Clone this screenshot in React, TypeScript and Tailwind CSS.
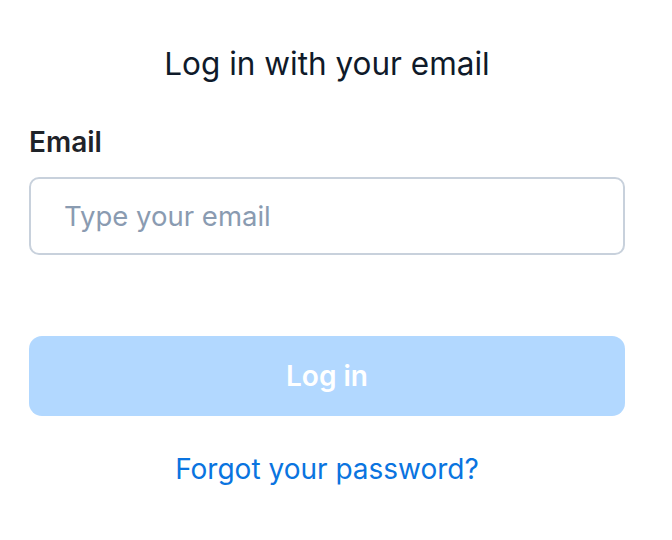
export default function App() {
  return (
    <div className="w-[654px] h-[540px] bg-white px-[29px] font-['Inter','Liberation_Sans',sans-serif]">
      <h1 className="pt-[44px] text-center text-[31.5px] leading-[40px] font-normal text-[#0f1a2a]">
        Log in with your email
      </h1>
      <label className="block mt-[41px] text-[28px] leading-[34px] font-semibold text-[#1f2329]">
        Email
      </label>
      <input
        type="email"
        placeholder="Type your email"
        className="mt-[18px] w-full h-[78px] rounded-[10px] border-2 border-[#c8d1dc] px-[33px] text-[27.5px] text-[#1f2329] placeholder:text-[#8a9bb1] outline-none"
      />
      <button className="mt-[81px] w-full h-[80px] rounded-[13px] bg-[#b2d8ff] text-[28px] font-semibold text-white">
        Log in
      </button>
      <div className="mt-[33px] text-center text-[28px] leading-[40px] text-[#0a74e0]">
        Forgot your password?
      </div>
    </div>
  );
}
